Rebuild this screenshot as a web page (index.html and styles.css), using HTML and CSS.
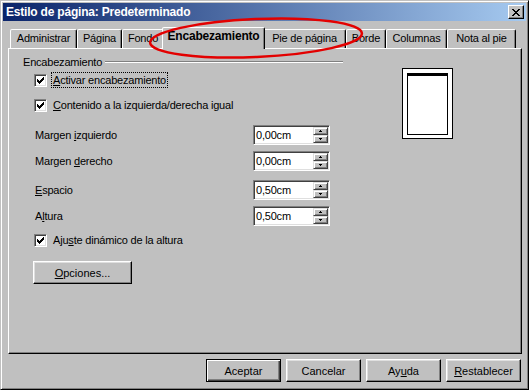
FILE: index.html
```html
<!DOCTYPE html>
<html>
<head>
  <meta charset="utf-8">
  <title>Estilo de página: Predeterminado</title>
  <link rel="stylesheet" href="styles.css">
</head>
<body>

<div class="dlg">
  <div class="caption">
    <span class="caption-text">Estilo de página: Predeterminado</span>
    <span class="caption-close">
      <svg width="8" height="7" viewBox="0 0 8 7" shape-rendering="crispEdges"><path d="M0 0h2v1h-2z M6 0h2v1h-2z M1 1h2v1h-2z M5 1h2v1h-2z M2 2h4v1h-4z M3 3h2v1h-2z M2 4h4v1h-4z M1 5h2v1h-2z M5 5h2v1h-2z M0 6h2v1h-2z M6 6h2v1h-2z" fill="#000"/></svg>
    </span>
  </div>

  <div class="tabs">
    <div class="tab tab-admin">Administrar</div>
    <div class="tab tab-page">Página</div>
    <div class="tab tab-bg">Fondo</div>
    <div class="tab tab-active">Encabezamiento</div>
    <div class="tab tab-footer">Pie de página</div>
    <div class="tab tab-border">Borde</div>
    <div class="tab tab-cols">Columnas</div>
    <div class="tab tab-notes">Nota al pie</div>
  </div>

  <div class="panel">
    <div class="main">
      <div class="group"><span>Encabezamiento</span><span class="group-line"></span></div>

      <div class="check gap-3">
        <span class="box"><svg width="7" height="7" viewBox="0 0 7 7" shape-rendering="crispEdges"><path d="M6 0h1v1h-1z M5 1h2v1h-2z M0 2h1v1h-1z M4 2h3v1h-3z M0 3h2v1h-2z M3 3h3v1h-3z M0 4h5v1h-5z M1 5h3v1h-3z M2 6h1v1h-1z" fill="#000"/></svg></span>
        <span class="check-text focus"><u>A</u>ctivar encabezamiento</span>
      </div>
      <div class="check gap-9">
        <span class="box"><svg width="7" height="7" viewBox="0 0 7 7" shape-rendering="crispEdges"><path d="M6 0h1v1h-1z M5 1h2v1h-2z M0 2h1v1h-1z M4 2h3v1h-3z M0 3h2v1h-2z M3 3h3v1h-3z M0 4h5v1h-5z M1 5h3v1h-3z M2 6h1v1h-1z" fill="#000"/></svg></span>
        <span class="check-text"><u>C</u>ontenido a la izquierda/derecha igual</span>
      </div>

      <div class="field gap-12">
        <span class="field-label">Margen <u>i</u>zquierdo</span>
        <div class="spin"><span class="spin-value">0,00cm</span><span class="spin-btns"><span class="spin-btn"><svg width="3" height="2" viewBox="0 0 3 2" shape-rendering="crispEdges"><path d="M1 0h1v1h-1z M0 1h3v1h-3z"/></svg></span><span class="spin-btn"><svg width="3" height="2" viewBox="0 0 3 2" shape-rendering="crispEdges"><path d="M0 0h3v1h-3z M1 1h1v1h-1z"/></svg></span></span></div>
      </div>
      <div class="field gap-6">
        <span class="field-label">Margen <u>d</u>erecho</span>
        <div class="spin"><span class="spin-value">0,00cm</span><span class="spin-btns"><span class="spin-btn"><svg width="3" height="2" viewBox="0 0 3 2" shape-rendering="crispEdges"><path d="M1 0h1v1h-1z M0 1h3v1h-3z"/></svg></span><span class="spin-btn"><svg width="3" height="2" viewBox="0 0 3 2" shape-rendering="crispEdges"><path d="M0 0h3v1h-3z M1 1h1v1h-1z"/></svg></span></span></div>
      </div>
      <div class="field gap-9">
        <span class="field-label"><u>E</u>spacio</span>
        <div class="spin"><span class="spin-value">0,50cm</span><span class="spin-btns"><span class="spin-btn"><svg width="3" height="2" viewBox="0 0 3 2" shape-rendering="crispEdges"><path d="M1 0h1v1h-1z M0 1h3v1h-3z"/></svg></span><span class="spin-btn"><svg width="3" height="2" viewBox="0 0 3 2" shape-rendering="crispEdges"><path d="M0 0h3v1h-3z M1 1h1v1h-1z"/></svg></span></span></div>
      </div>
      <div class="field gap-6">
        <span class="field-label">A<u>l</u>tura</span>
        <div class="spin"><span class="spin-value">0,50cm</span><span class="spin-btns"><span class="spin-btn"><svg width="3" height="2" viewBox="0 0 3 2" shape-rendering="crispEdges"><path d="M1 0h1v1h-1z M0 1h3v1h-3z"/></svg></span><span class="spin-btn"><svg width="3" height="2" viewBox="0 0 3 2" shape-rendering="crispEdges"><path d="M0 0h3v1h-3z M1 1h1v1h-1z"/></svg></span></span></div>
      </div>

      <div class="check gap-6">
        <span class="box"><svg width="7" height="7" viewBox="0 0 7 7" shape-rendering="crispEdges"><path d="M6 0h1v1h-1z M5 1h2v1h-2z M0 2h1v1h-1z M4 2h3v1h-3z M0 3h2v1h-2z M3 3h3v1h-3z M0 4h5v1h-5z M1 5h3v1h-3z M2 6h1v1h-1z" fill="#000"/></svg></span>
        <span class="check-text">Aju<u>s</u>te dinámico de la altura</span>
      </div>

      <button class="btn btn-wide gap-13"><u>O</u>pciones...</button>
    </div>

    <div class="preview"><div class="preview-page"></div></div>
  </div>

  <div class="actions">
    <button class="btn btn-default">Aceptar</button>
    <button class="btn">Cancelar</button>
    <button class="btn">Ay<u>u</u>da</button>
    <button class="btn"><u>R</u>establecer</button>
  </div>

  <svg class="mark" width="529" height="80" viewBox="0 0 529 80">
    <ellipse cx="256" cy="38" rx="106" ry="19" transform="rotate(-2.5 256 38)" fill="none" stroke="#e30000" stroke-width="2.5"/>
  </svg>
</div>

</body>
</html>
```

FILE: styles.css
```css
*,
*::before,
*::after {
  box-sizing: border-box;
}

body {
  margin: 0;
  background: #c0c0c0;
  font-family: "Liberation Sans", Arial, sans-serif;
  font-size: 11px;
  letter-spacing: -0.2px;
  color: #000;
}

u {
  text-decoration-thickness: 1px;
}

.dlg {
  position: relative;
  width: 529px;
  height: 390px;
  padding: 2px;
  background: #c0c0c0;
  border: 1px solid;
  border-color: #c0c0c0 #000 #000 #c0c0c0;
  box-shadow: inset 1px 1px #fff, inset -1px -1px #808080;
}

/* title bar */
.caption {
  display: flex;
  align-items: center;
  height: 18px;
  padding: 0 2px 0 3px;
  background: linear-gradient(to right, #0a246a, #a6caf0);
  color: #fff;
  font-weight: bold;
  font-size: 12px;
}

.caption-close {
  display: flex;
  align-items: center;
  justify-content: center;
  width: 16px;
  height: 14px;
  margin-left: auto;
  background: #c0c0c0;
  border: 1px solid;
  border-color: #fff #000 #000 #fff;
  box-shadow: inset -1px -1px #808080;
}

/* tabs */
.tabs {
  position: relative;
  z-index: 1;
  display: flex;
  align-items: flex-end;
  height: 21px;
  margin-top: 6px;
  padding-left: 7px;
}

.tab {
  height: 19px;
  line-height: 17px;
  text-align: center;
  white-space: nowrap;
  background: #c0c0c0;
  border: 1px solid;
  border-bottom: 0;
  border-color: #fff #000 transparent #fff;
  border-radius: 2px 2px 0 0;
  box-shadow: inset -1px 0 #808080;
}

.tab-admin { width: 67px; }
.tab-page { width: 45px; }
.tab-bg { width: 42px; }
.tab-footer { width: 83px; }
.tab-border { width: 40px; }
.tab-cols { width: 61px; }
.tab-notes { width: 69px; }

.tab-active {
  position: relative;
  z-index: 2;
  width: 103px;
  height: 22px;
  margin: 0 -2px -1px;
  font-weight: bold;
  font-size: 12px;
}

/* page */
.panel {
  display: flex;
  align-items: flex-start;
  width: 514px;
  height: 306px;
  margin-left: 5px;
  padding: 6px 0 0 14px;
  border: 1px solid;
  border-color: #fff #000 #000 #fff;
  box-shadow: inset -1px -1px #808080;
}

.main {
  display: flex;
  flex-direction: column;
  align-items: flex-start;
  width: 320px;
}

.group {
  display: flex;
  align-items: center;
  width: 100%;
  height: 14px;
  line-height: 14px;
}

.group-line {
  flex: 1;
  height: 2px;
  margin-left: 3px;
  border-top: 1px solid #808080;
  border-bottom: 1px solid #fff;
}

.gap-3 { margin-top: 3px; }
.gap-6 { margin-top: 6px; }
.gap-9 { margin-top: 9px; }
.gap-12 { margin-top: 12px; }
.gap-13 { margin-top: 13px; }

.check {
  display: flex;
  align-items: center;
  height: 16px;
  margin-left: 11px;
}

.box {
  display: flex;
  align-items: center;
  justify-content: center;
  width: 13px;
  height: 13px;
  background: #fff;
  border: 1px solid;
  border-color: #808080 #fff #fff #808080;
  box-shadow: inset 1px 1px #404040, inset -1px -1px #dfdfdf;
}

.box svg,
.spin-btn svg,
.caption-close svg {
  display: block;
}

.check-text {
  margin-left: 4px;
  padding: 1px;
  line-height: 12px;
  border: 1px dotted transparent;
}

.check-text.focus {
  border-color: #000;
}

.field {
  display: flex;
  align-items: center;
  height: 20px;
  margin-left: 11px;
}

.field-label {
  width: 219px;
  padding-left: 1px;
}

.spin {
  display: flex;
  width: 77px;
  height: 20px;
  background: #fff;
  border: 1px solid;
  border-color: #808080 #fff #fff #808080;
  box-shadow: inset 1px 1px #404040, inset -1px -1px #dfdfdf;
}

.spin-value {
  flex: 1;
  padding-left: 2px;
  line-height: 18px;
}

.spin-btns {
  display: flex;
  flex-direction: column;
  width: 15px;
  margin: 1px 1px 1px 0;
}

.spin-btn {
  display: flex;
  flex: 1;
  align-items: center;
  justify-content: center;
  background: #c0c0c0;
  border: 1px solid;
  border-color: #dfdfdf #404040 #404040 #dfdfdf;
  box-shadow: inset 1px 1px #fff, inset -1px -1px #808080;
}

/* page preview */
.preview {
  width: 51px;
  height: 71px;
  margin: 13px 0 0 59px;
  padding: 4px 4px 3px;
  background: #fff;
  border: 1px solid #000;
}

.preview-page {
  height: 100%;
  border: 1px solid #000;
  border-top-width: 3px;
}

/* buttons */
.btn {
  width: 75px;
  height: 23px;
  padding: 0;
  font: inherit;
  color: #000;
  background: #c0c0c0;
  border: 1px solid;
  border-color: #fff #000 #000 #fff;
  box-shadow: inset -1px -1px #808080, inset 1px 1px #dfdfdf;
}

.btn-wide {
  width: 99px;
  margin-left: 10px;
}

.btn-default {
  border-color: #000;
  box-shadow: inset 1px 1px #fff, inset -1px -1px #404040, inset -2px -2px #808080;
}

.actions {
  display: flex;
  justify-content: flex-end;
  gap: 5px;
  margin-top: 5px;
  padding-right: 5px;
}

.mark {
  position: absolute;
  left: -1px;
  top: -1px;
  z-index: 5;
  pointer-events: none;
}
```
